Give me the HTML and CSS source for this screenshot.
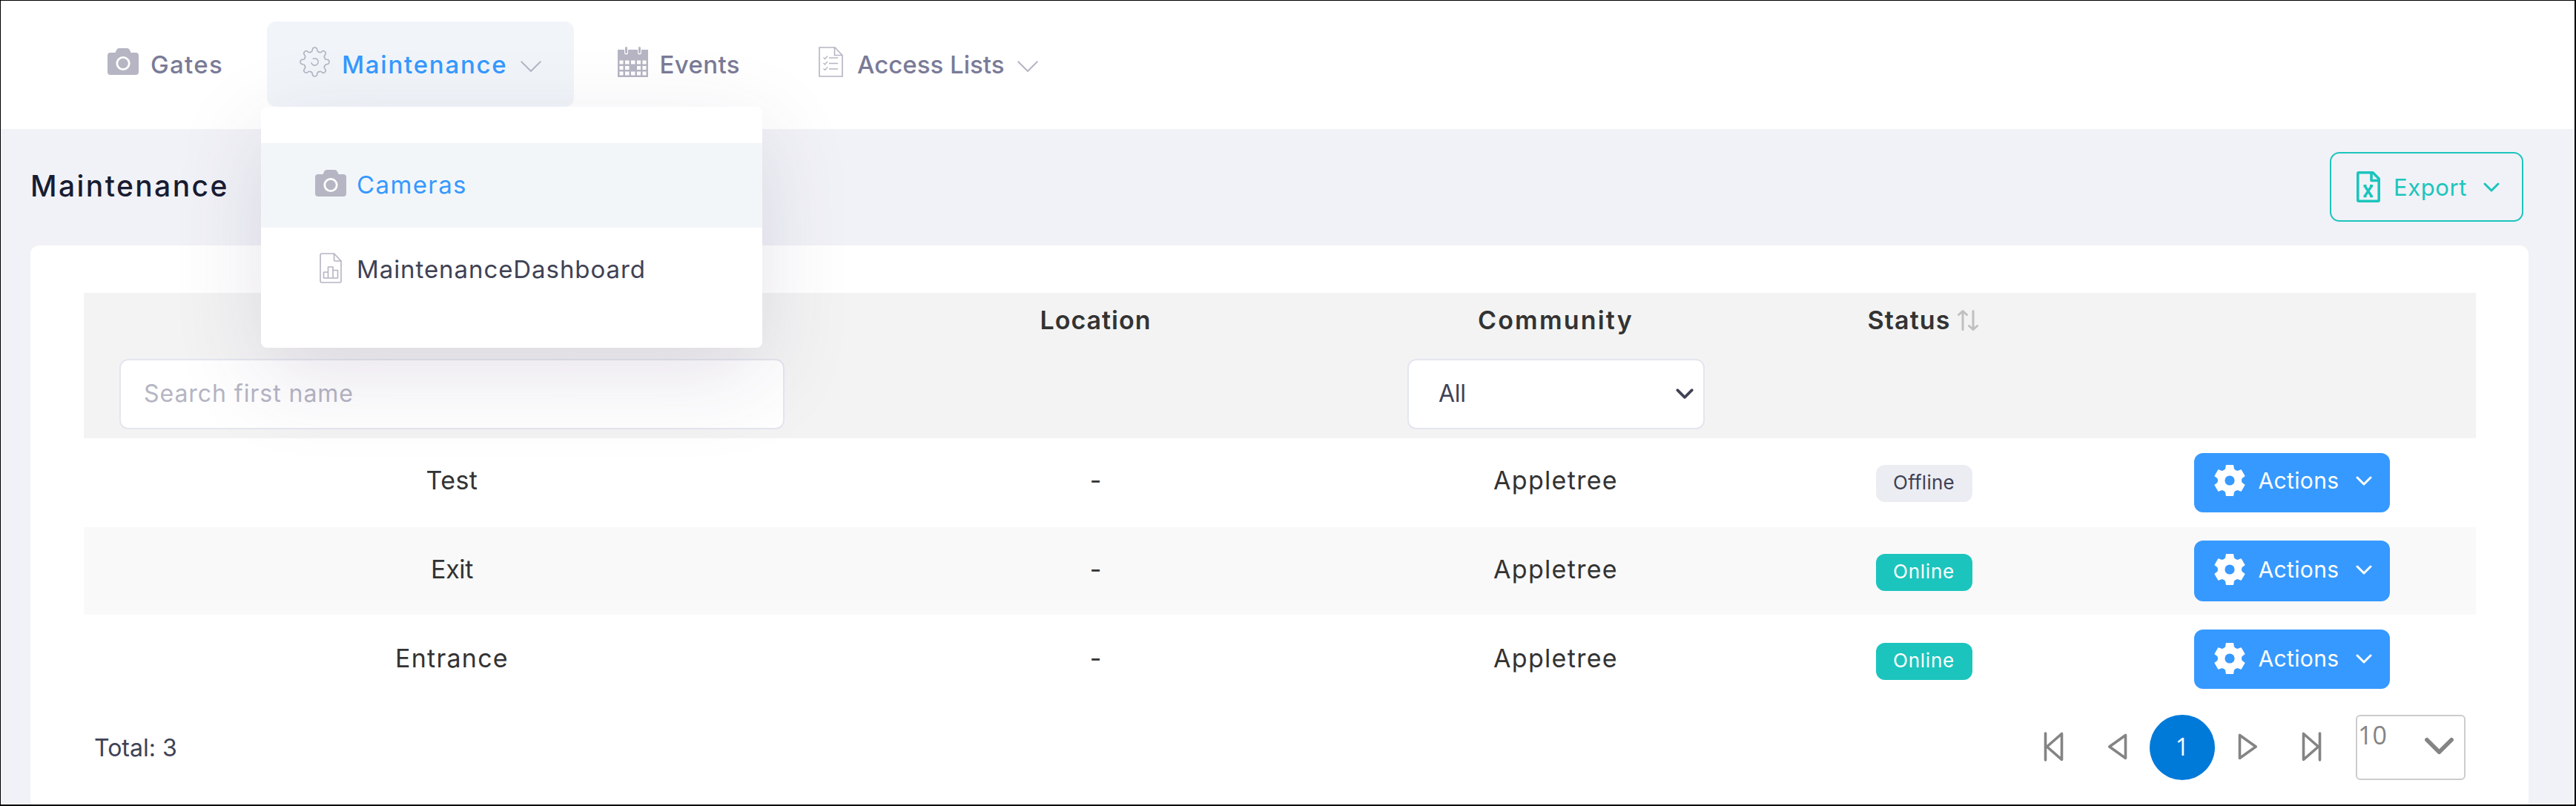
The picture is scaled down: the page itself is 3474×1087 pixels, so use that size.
FILE: index.html
```html
<!DOCTYPE html>
<html lang="en">
<head>
<meta charset="utf-8">
<title>Maintenance</title>
<link rel="stylesheet" href="styles.css">
</head>
<body>
<svg class="sprite" aria-hidden="true">
  <symbol id="i-camera" viewBox="0 0 42 36">
    <path fill="currentColor" d="M4 6H10.500L12 2.500Q13 0 15.500 0H26.500Q29 0 30 2.500L31.500 6H38Q42 6 42 10V32Q42 36 38 36H4Q0 36 0 32V10Q0 6 4 6Z"/>
    <circle class="lens" cx="21" cy="20.500" r="8.200" fill="none" stroke-width="2.800"/>
  </symbol>
  <symbol id="i-cog" viewBox="0 0 41 41">
    <g fill="none" stroke="currentColor" stroke-width="1.600" stroke-linecap="round">
      <path id="tooth" d="M14.900 7.100Q17.100 7.100 17.300 4.300Q17.500 1 20.500 1Q23.500 1 23.700 4.300Q23.900 7.100 26.100 7.100"/>
      <use href="#tooth" transform="rotate(45 20.500 20.500)"/>
      <use href="#tooth" transform="rotate(90 20.500 20.500)"/>
      <use href="#tooth" transform="rotate(135 20.500 20.500)"/>
      <use href="#tooth" transform="rotate(180 20.500 20.500)"/>
      <use href="#tooth" transform="rotate(225 20.500 20.500)"/>
      <use href="#tooth" transform="rotate(270 20.500 20.500)"/>
      <use href="#tooth" transform="rotate(315 20.500 20.500)"/>
      <path d="M18.300 16.300A4.700 4.700 0 1 1 16 21.800"/>
    </g>
  </symbol>
  <symbol id="i-calendar" viewBox="0 0 41 41">
    <path fill="currentColor" fill-rule="evenodd" d="M0 4H9V8Q9 10.500 11.500 10.500T14 8V4H27V8Q27 10.500 29.500 10.500T32 8V4H41V41H0ZM2.500 18.500V23.500H7.500V18.500ZM10 18.500V23.500H15.500V18.500ZM18 18.500V23.500H23.500V18.500ZM26 18.500V23.500H31V18.500ZM33.500 18.500V23.500H38.500V18.500ZM2.500 26V31H7.500V26ZM10 26V31H15.500V26ZM26 26V31H31V26ZM33.500 26V31H38.500V26ZM2.500 33.500V38.500H7.500V33.500ZM10 33.500V38.500H15.500V33.500ZM18 33.500V38.500H23.500V33.500ZM26 33.500V38.500H31V33.500ZM33.500 33.500V38.500H38.500V33.500Z"/>
    <path stroke="currentColor" stroke-width="3" stroke-linecap="round" d="M11.500 1.500V7.500M29.500 1.500V7.500"/>
  </symbol>
  <symbol id="i-list" viewBox="0 0 33 41">
    <path fill="none" stroke="currentColor" stroke-width="1.600" d="M1 1H22L32 11.500V40H1ZM21.500 1V11.500H32"/>
    <path fill="none" stroke="currentColor" stroke-width="1.300" d="M14 15H26M14 22.500H26M14 30H26M6.500 14.500L8.500 16.500L12 12.500M6.500 22L8.500 24L12 20M6.500 29.500L8.500 31.500L12 27.500"/>
  </symbol>
  <symbol id="i-report" viewBox="0 0 30 41">
    <path fill="none" stroke="currentColor" stroke-width="1.600" stroke-linejoin="round" d="M3 1H19.500L29 11V38Q29 40 27 40H3Q1 40 1 38V3Q1 1 3 1ZM19.500 1V9.500Q19.500 11 21 11H29M5.500 34V26H11.500V34ZM11.500 34V19H18V34ZM18 34V23.500H24.500V34Z"/>
  </symbol>
  <symbol id="i-excel" viewBox="0 0 32 42">
    <path fill="none" stroke="currentColor" stroke-width="3.600" stroke-linejoin="round" d="M3 1.800H22L30.200 10V39Q30.200 40.200 29 40.200H3Q1.800 40.200 1.800 39V3Q1.800 1.800 3 1.800ZM20 2V12.500H30"/>
    <path fill="none" stroke="currentColor" stroke-width="3.400" d="M11 19.500L20.500 34M20.500 19.500L11 34M9.500 19.800H13.500M18 19.800H22M9.500 33.600H13.500M18 33.600H22"/>
  </symbol>
  <symbol id="i-gear" viewBox="-21 -21 42 42">
    <circle r="11.300" fill="none" stroke="currentColor" stroke-width="9.400"/>
    <g fill="currentColor" stroke="currentColor" stroke-width="1.500" stroke-linejoin="round">
      <path id="cog" d="M-4.500 -20.200H4.500L5.200 -15.500L8.500 -12H-8.500L-5.200 -15.500Z"/>
      <use href="#cog" transform="rotate(60)"/>
      <use href="#cog" transform="rotate(120)"/>
      <use href="#cog" transform="rotate(180)"/>
      <use href="#cog" transform="rotate(240)"/>
      <use href="#cog" transform="rotate(300)"/>
    </g>
  </symbol>
  <symbol id="i-chevron" viewBox="0 0 28 15"><path fill="none" stroke="currentColor" stroke-width="2" d="M.7 .7L14 14L27.300 .7"/></symbol>
  <symbol id="i-caret" viewBox="0 0 22 13"><path class="caret-line" fill="none" stroke="currentColor" stroke-linecap="round" stroke-linejoin="round" d="M2 2L11 11L20 2"/></symbol>
  <symbol id="i-sort" viewBox="0 0 28 28"><path fill="none" stroke="currentColor" stroke-width="3" stroke-linecap="round" stroke-linejoin="round" d="M7 26.500V2M1.500 6.500L7 1.500L12.500 6.500M21 1.500V26M15.500 21.500L21 26.500L26.500 21.500"/></symbol>
  <symbol id="i-prev" viewBox="0 0 27 40"><path fill="none" stroke="currentColor" stroke-width="3.600" stroke-linejoin="round" d="M24.500 4.500V35.500L2.800 20Z"/></symbol>
  <symbol id="i-first" viewBox="0 0 27 40"><path fill="none" stroke="currentColor" stroke-width="3.600" stroke-linejoin="round" stroke-linecap="round" d="M24.500 2.500V37.500L4.500 20ZM2.500 2V38"/></symbol>
</svg>

<div class="frame">
  <nav class="nav">
    <a class="nav-item"><svg class="ico ico-camera"><use href="#i-camera"/></svg><span class="lbl gates">Gates</span></a>
    <div class="nav-group">
      <a class="nav-item active"><svg class="ico ico-sq"><use href="#i-cog"/></svg><span class="lbl maint">Maintenance</span><svg class="ico chev"><use href="#i-chevron"/></svg></a>
      <div class="menu">
        <a class="menu-item current"><span class="menu-ico"><svg class="ico ico-camera"><use href="#i-camera"/></svg></span><span class="cameras">Cameras</span></a>
        <a class="menu-item"><span class="menu-ico"><svg class="ico ico-report"><use href="#i-report"/></svg></span><span class="dashboard">MaintenanceDashboard</span></a>
      </div>
    </div>
    <a class="nav-item"><svg class="ico ico-sq"><use href="#i-calendar"/></svg><span class="lbl events">Events</span></a>
    <a class="nav-item"><svg class="ico ico-list"><use href="#i-list"/></svg><span class="lbl access">Access Lists</span><svg class="ico chev"><use href="#i-chevron"/></svg></a>
  </nav>

  <header class="subhead">
    <h1 class="title">Maintenance</h1>
    <button class="export"><svg class="ico-excel"><use href="#i-excel"/></svg><span class="export-label">Export</span><svg class="caret"><use href="#i-caret"/></svg></button>
  </header>

  <main class="card">
    <div class="grid head">
      <div class="th"><div class="th-title"></div><input class="search" type="text" placeholder="Search first name"></div>
      <div class="th"><div class="th-title"><span class="location">Location</span></div></div>
      <div class="th"><div class="th-title"><span class="community">Community</span></div><div class="select"><span class="all">All</span><svg class="select-caret"><use href="#i-caret"/></svg></div></div>
      <div class="th"><div class="th-title"><span class="status">Status</span><svg class="sort"><use href="#i-sort"/></svg></div></div>
      <div class="th"></div>
    </div>
    <div class="grid row row-a">
      <div class="td"><span class="test">Test</span></div><div class="td dash">-</div><div class="td"><span class="apple">Appletree</span></div>
      <div class="td-c"><span class="badge off">Offline</span></div>
      <div class="td-c"><button class="actions"><svg class="gear"><use href="#i-gear"/></svg><span class="act">Actions</span><svg class="caret"><use href="#i-caret"/></svg></button></div>
    </div>
    <div class="grid row row-b">
      <div class="td"><span class="exit">Exit</span></div><div class="td dash">-</div><div class="td"><span class="apple">Appletree</span></div>
      <div class="td-c"><span class="badge on">Online</span></div>
      <div class="td-c"><button class="actions"><svg class="gear"><use href="#i-gear"/></svg><span class="act">Actions</span><svg class="caret"><use href="#i-caret"/></svg></button></div>
    </div>
    <div class="grid row row-c">
      <div class="td"><span class="entrance">Entrance</span></div><div class="td dash">-</div><div class="td"><span class="apple">Appletree</span></div>
      <div class="td-c"><span class="badge on">Online</span></div>
      <div class="td-c"><button class="actions"><svg class="gear"><use href="#i-gear"/></svg><span class="act">Actions</span><svg class="caret"><use href="#i-caret"/></svg></button></div>
    </div>
    <footer class="foot">
      <span class="total">Total: 3</span>
      <div class="pager">
        <svg class="pg"><use href="#i-first"/></svg>
        <svg class="pg"><use href="#i-prev"/></svg>
        <span class="page">1</span>
        <svg class="pg flip"><use href="#i-prev"/></svg>
        <svg class="pg flip"><use href="#i-first"/></svg>
        <div class="size"><span class="size-num">10</span><svg class="size-caret"><use href="#i-caret"/></svg></div>
      </div>
    </footer>
  </main>
</div>
</body>
</html>
```
FILE: styles.css
```css
* { box-sizing: border-box; }
body { margin: 0; font-family: "Inter", "Noto Sans", sans-serif; font-size: 32px; color: #3f4254; }
button, input { font: inherit; margin: 0; }
svg { display: block; flex: none; }
.sprite { position: absolute; width: 0; height: 0; }

.frame {
  width: 3474px; height: 1087px; overflow: hidden;
  border: solid #000; border-width: 1px 2px 2px 1px;
  background: #f1f2f7;
  display: flex; flex-direction: column;
}

.nav { height: 173px; flex: none; padding: 28px 0 0 100px; background: #fff; display: flex; align-items: flex-start; gap: 15px; font-size: 33px; }
.nav-item { height: 115px; padding: 0 44px; display: flex; align-items: center; border-radius: 12px; color: #7a7b97; font-weight: 500; white-space: nowrap; }
.nav-item.active { background: #f1f5f9; color: #3699ff; }
.nav-group { position: relative; }
.ico { color: #b5b5c3; }
.ico-camera { width: 42px; height: 36px; margin-top: -7px; }
.ico-sq { width: 41px; height: 41px; margin-top: -6px; }
.ico-list { width: 33px; height: 41px; margin: -6px 4px 0 3px; }
.ico-report { width: 30px; height: 41px; margin-top: -2px; }
.lbl { margin-left: 16px; }
.chev { width: 28px; height: 15px; margin: 5px 0 0 18px; }
.lens { stroke: #fff; }

.gates { letter-spacing: 1.3px; }
.maint { letter-spacing: 1.75px; }
.events { margin-left: 15px; letter-spacing: .4px; }
.access { margin-left: 15px; letter-spacing: 0; }
.cameras { letter-spacing: 1.4px; }
.dashboard { letter-spacing: .93px; }

.menu {
  position: absolute; left: -8px; top: 115px; z-index: 2;
  width: 676px; height: 325px; padding-top: 49px;
  background: #fff; border-radius: 8px;
  box-shadow: 0 36px 120px rgba(82, 63, 105, .15);
}
.menu-item { height: 114px; padding: 0 0 3px 72px; display: flex; align-items: center; }
.menu-ico { width: 44px; margin-right: 13px; display: flex; justify-content: center; }
.menu-ico .ico-camera { margin-top: -4px; }
.current { background: #f3f6f9; color: #3699ff; }
.current .lens { stroke: #f3f6f9; }

.subhead { height: 157px; flex: none; padding: 31px 69px 0 40px; display: flex; justify-content: space-between; }
.title { margin: 0; font-size: 39px; line-height: 92px; font-weight: 500; letter-spacing: 2.4px; color: #181c32; }
.export { width: 261px; height: 94px; padding: 0 30px 0 34px; background: none; border: 2px solid #1bc5bd; border-radius: 13px; color: #1bc5bd; font-size: 31px; display: flex; align-items: center; }
.export-label { letter-spacing: .6px; }
.ico-excel { width: 32px; height: 42px; margin-right: 18px; }
.caret { width: 22px; height: 13px; margin-left: auto; }
.caret-line { stroke-width: var(--caret-weight, 3); }

.card { width: 3369px; height: 760px; flex: none; margin-left: 40px; padding: 64px 71px 0 72px; background: #fff; border-radius: 12px; }
.grid { display: grid; grid-template-columns: 993px 743px 498px 495px 497px; }
.head { height: 196px; background: #f3f3f3; }
.th { display: flex; flex-direction: column; align-items: center; }
.th-title { height: 73px; margin-bottom: 16px; display: flex; align-items: center; color: #333; font-size: 34px; font-weight: 600; }
.location { letter-spacing: 1px; }
.community { letter-spacing: 2.2px; }
.status { letter-spacing: 1.1px; }
.search { width: 897px; height: 95px; padding: 0 31px 2px; border: 2px solid #e4e6ef; border-radius: 12px; background: #fff; letter-spacing: .95px; }
.search::placeholder { color: #b5b5c3; opacity: 1; }
.select { width: 401px; height: 95px; margin-left: 1px; padding: 0 13px 2px 40px; border: 2px solid #e4e6ef; border-radius: 12px; background: #fff; display: flex; align-items: center; justify-content: space-between; }
.all { letter-spacing: -.3px; }
.select-caret { --caret-weight: 3.4; width: 24px; height: 14px; }
.sort { width: 28px; height: 28px; margin: 0 2px 0 10px; color: #c0c0c0; }

.row { height: 120px; color: #333; font-size: 34px; }
.row-b { height: 118px; background: #f9f9f9; }
.td, .td-c { display: flex; align-items: center; justify-content: center; }
.td { padding-bottom: 7px; }
.row-b .td { padding-bottom: 5px; }
.row-c .td { padding-bottom: 3px; }
.test { letter-spacing: .4px; }
.exit { letter-spacing: -.4px; }
.entrance { letter-spacing: 1.25px; }
.apple { letter-spacing: 1.3px; }
.badge { height: 50px; width: 130px; margin-top: 2px; padding-bottom: 3px; border-radius: 12px; font-size: 26px; line-height: 47px; text-align: center; }
.off { background: #ebedf3; color: #3f4254; letter-spacing: .25px; }
.on { background: #1bc5bd; color: #fff; letter-spacing: .77px; }
.row-b .badge { margin-top: 4px; }
.row-c .badge { margin-top: 6px; }
.actions { width: 264px; height: 80px; padding: 0 24px 6px 27px; border: 0; border-radius: 12px; background: #3699ff; color: #fff; font-size: 30px; display: flex; align-items: center; }
.row-b .actions { height: 82px; padding-bottom: 4px; }
.row-c .actions { padding-bottom: 2px; }
.act { letter-spacing: .36px; }
.gear { width: 42px; height: 42px; margin-right: 18px; }

.foot { height: 118px; padding: 0 14px; display: flex; align-items: center; justify-content: space-between; }
.pager { display: flex; align-items: center; color: #848484; }
.pg { width: 27px; height: 40px; margin: -2px 59px 0 0; }
.pg + .pg { margin-right: 30px; }
.page { width: 88px; height: 88px; margin-right: 31px; border-radius: 50%; background: #007ad9; color: #fff; font: 32px/86px "Open Sans", sans-serif; text-align: center; }
.flip { transform: scaleX(-1); }
.page + .flip { margin-right: 59px; }
.flip + .flip { margin-right: 46px; }
.size { width: 148px; height: 88px; padding: 0 13px 0 1px; border: 2px solid #ccc; border-radius: 6px; display: flex; justify-content: space-between; }
.size-num { font: 34px/50px "Open Sans", sans-serif; }
.size-caret { width: 41px; height: 24px; margin-top: 28px; }
```
